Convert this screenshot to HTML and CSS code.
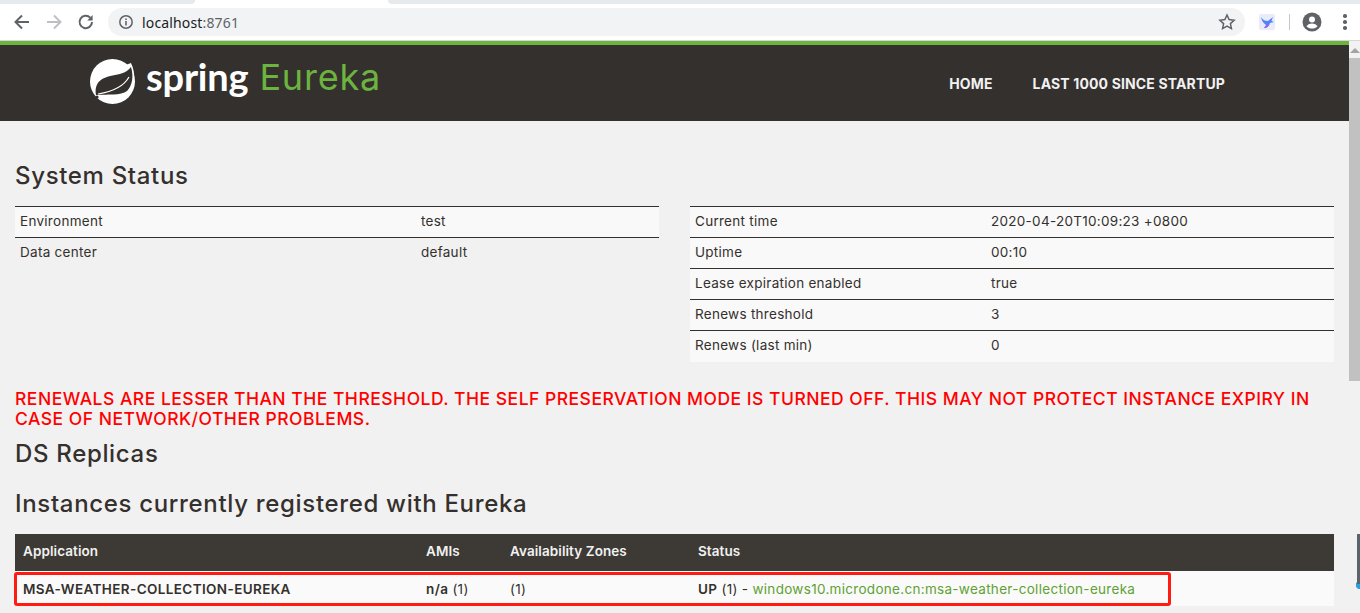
FILE: index.html
```html
<!DOCTYPE html>
<html lang="en">
<head>
<meta charset="utf-8">
<title>Eureka</title>
<link rel="stylesheet" href="styles.css">
</head>
<body>
<div class="tabstrip"><div class="tab-left"></div><div class="tab-gap"></div><div class="tab-right"></div></div>
<div class="toolbar">
  <svg class="tb-icon" width="20" height="20" viewBox="0 0 20 20"><path d="M17 10H4M10 3.5L3.5 10l6.5 6.5" fill="none" stroke="#5f6368" stroke-width="2"/></svg>
  <svg class="tb-icon" width="20" height="20" viewBox="0 0 20 20"><path d="M3 10h13M10 3.5l6.5 6.5-6.500 6.500" fill="none" stroke="#bdbfc2" stroke-width="2"/></svg>
  <svg class="tb-icon" width="20" height="20" viewBox="0 0 20 20"><path d="M16 10a6.2 6.2 0 1 1-1.8-4.4" fill="none" stroke="#5f6368" stroke-width="2"/><path d="M16.6 3v5.4h-5.4z" fill="#5f6368"/></svg>
  <div class="omnibox">
    <svg width="16" height="16" viewBox="0 0 16 16"><circle cx="8" cy="8" r="6.2" fill="none" stroke="#5f6368" stroke-width="1.5"/><path d="M8 7v4.4M8 4.4v1.5" stroke="#5f6368" stroke-width="1.6"/></svg>
    <span class="url">localhost<span class="port">:8761</span></span>
    <svg class="star" width="18" height="18" viewBox="0 0 18 18"><path d="M9 2l2.1 4.6 5 .6-3.700 3.400 1 5L9 13.100l-4.400 2.500 1-5L1.900 7.200l5-.6z" fill="none" stroke="#5f6368" stroke-width="1.500"/></svg>
  </div>
  <div class="ext"><svg width="16" height="16" viewBox="0 0 16 16"><rect width="16" height="16" rx="2" fill="#e9ebfa"/><path d="M2 3C4 6 6 7 9 7L14 3L12.500 7L15 8L11 9C10 12 8 14 5 14L7 11C4 9 2.500 6 2 3z" fill="#4f86f7"/><path d="M5 14C8 14 10 12 11 9L8 11z" fill="#a05cf0"/></svg></div>
  <div class="tb-sep"></div>
  <svg class="avatar" width="20" height="20" viewBox="0 0 20 20"><circle cx="10" cy="10" r="9.500" fill="#5f6368"/><circle cx="10" cy="7.500" r="3" fill="#fff"/><path d="M4.500 14.300c1.500-2 3.500-2.700 5.500-2.700s4 .7 5.500 2.700c-1.300 1.500-3.300 2.300-5.500 2.300s-4.200-.8-5.500-2.300z" fill="#fff"/></svg>
  <div class="menu"><i></i><i></i><i></i></div>
</div>
<div class="viewport">
  <main class="page">
    <nav class="navbar">
      <div class="brand">
        <svg class="leaf" width="50" height="50" viewBox="0 0 50 50"><circle cx="22.500" cy="24.500" r="22.500" fill="#fff"/><path d="M33 9L41 6C46 17 45 27 40 36z" fill="#fff"/><path d="M6 38C4 25 12 20 25 18C32 17 37 15 41 10C44 20 42 29 37 34C31 39 17 37 6 38z" fill="#34302d"/><path d="M8 37C20 35 33 31 39 20" fill="none" stroke="#fff" stroke-width="1.200"/><circle cx="7" cy="40" r="1.600" fill="#34302d"/></svg>
        <span class="brand-spring">spring</span>
        <span class="brand-eureka">Eureka</span>
      </div>
      <div class="nav-links"><a>HOME</a><a>LAST 1000 SINCE STARTUP</a></div>
    </nav>
    <div class="content">
      <h1 class="title-status">System Status</h1>
      <div class="columns">
        <table class="info">
          <tr class="odd"><td class="k">Environment</td><td>test</td></tr>
          <tr><td class="k">Data center</td><td>default</td></tr>
        </table>
        <table class="info">
          <tr class="odd"><td class="k2">Current time</td><td>2020-04-20T10:09:23 +0800</td></tr>
          <tr class="odd"><td class="k2">Uptime</td><td>00:10</td></tr>
          <tr class="odd"><td class="k2">Lease expiration enabled</td><td>true</td></tr>
          <tr class="odd"><td class="k2">Renews threshold</td><td>3</td></tr>
          <tr class="odd"><td class="k2">Renews (last min)</td><td>0</td></tr>
        </table>
      </div>
      <h4 class="warning">RENEWALS ARE LESSER THAN THE THRESHOLD. THE SELF PRESERVATION MODE IS TURNED OFF. THIS MAY NOT PROTECT INSTANCE EXPIRY IN CASE OF NETWORK/OTHER PROBLEMS.</h4>
      <h1 class="title-ds">DS Replicas</h1>
      <h1 class="title-inst">Instances currently registered with Eureka</h1>
      <table class="instances">
        <tr class="head"><th class="c1">Application</th><th class="c2">AMIs</th><th class="c3">Availability Zones</th><th>Status</th></tr>
        <tr class="row"><td><b>MSA-WEATHER-COLLECTION-EUREKA</b></td><td><b>n/a</b> (1)</td><td>(1)</td><td><b>UP</b> (1) - <a class="link">windows10.microdone.cn:msa-weather-collection-eureka</a></td></tr>
      </table>
    </div>
    <div class="callout"></div>
  </main>
  <aside class="scrollbar"><div class="arrow"></div><div class="thumb"></div></aside>
  <div class="thermo"></div>
</div>
</body>
</html>
```
FILE: styles.css
```css
* { box-sizing: border-box; }
html, body { margin: 0; height: 613px; overflow: hidden; background: #fff; }
body { font-family: "Inter", "Noto Sans", sans-serif; color: #34302d; }

.tabstrip { height: 4px; display: flex; background: #fff; }
.tab-left { width: 195px; background: #e7eaed; border-radius: 0 0 6px 0; }
.tab-gap { flex: 0 0 193px; }
.tab-right { flex: 1; background: #e7eaed; border-radius: 0 0 0 6px; }

.toolbar { height: 36px; display: flex; align-items: center; background: #fff; padding-left: 12px; }
.tb-icon { margin-right: 12px; flex: none; }
.omnibox { width: 1137px; height: 28px; border-radius: 14px; background: #f1f3f4; display: flex; align-items: center; padding-left: 10px; flex: none; }
.url { margin-left: 8px; font: 14px "Noto Sans", "Open Sans", sans-serif; color: #202124; letter-spacing: 0.15px; }
.port { color: #5f6368; }
.star { margin-left: auto; margin-right: 9px; }
.ext { margin-left: 14px; width: 16px; height: 16px; flex: none; display: flex; }
.tb-sep { width: 1px; height: 16px; background: #c4c6c8; margin-left: 14px; }
.avatar { margin-left: 12px; flex: none; }
.menu { margin-left: 21px; display: flex; flex-direction: column; gap: 2.500px; }
.menu i { width: 3.500px; height: 3.500px; border-radius: 50%; background: #5f6368; display: block; }

.viewport { position: relative; display: flex; height: 573px; border-top: 1px solid #d5d7d9; overflow: hidden; background: #f1f1f1; }
.page { position: relative; flex: 1; min-width: 0; overflow: hidden; }
.navbar { height: 80px; border-top: 4px solid #6db33f; background: #34302d; display: flex; justify-content: space-between; padding: 0 124px 0 90px; }
.brand { display: flex; align-items: flex-start; padding-top: 12px; color: #fff; }
.leaf { flex: none; margin-right: -4px; }
.brand-spring { font: 700 38px/44px "Lato", sans-serif; margin-left: 10px; letter-spacing: -0.2px; margin-top: -3px; }
.brand-eureka { font: 400 36px/44px "Inter", sans-serif; color: #6db33f; margin-left: 11px; letter-spacing: 0.8px; margin-top: -2px; }
.nav-links { display: flex; gap: 40px; padding-top: 30px; }
.nav-links a { font: 700 14px/17px "Inter", sans-serif; color: #f1f1f1; letter-spacing: 0.14px; }

.content { padding: 0 15px; }
h1 { margin: 0; font-weight: 500; font-size: 24px; line-height: 30px; color: #34302d; letter-spacing: 0.67px; }
.title-status { margin-top: 40px; }
.columns { display: grid; grid-template-columns: 644px 644px; column-gap: 31px; margin-top: 15px; height: 155px; align-items: start; }
table { border-collapse: collapse; border-spacing: 0; }
.info { width: 644px; table-layout: fixed; font-size: 13.500px; color: #34302d; letter-spacing: 0.28px; }
.info td { height: 31px; padding: 0 5px 2px; border-top: 1px solid #34302d; vertical-align: middle; }
.info .odd td { background: #f9f9f9; }
.info td.k { width: 401px; }
.info td.k2 { width: 296px; }
.warning { margin: 28px 0 0; font-weight: 500; font-size: 17.500px; line-height: 20px; color: #f00; letter-spacing: 0.5px; }
.title-ds { margin-top: 10px; }
.title-inst { margin-top: 20px; }
.instances { width: 1319px; margin-top: 15px; table-layout: fixed; font-size: 13.500px; letter-spacing: 0.3px; }
.instances th { background: #3d3a35; color: #f1f1f1; font-weight: 600; text-align: left; height: 37px; padding: 0 8px 3px; font-size: 13.500px; letter-spacing: 0.08px; }
.instances .c1 { width: 403px; }
.instances .c2 { width: 84px; }
.instances .c3 { width: 188px; }
.instances td { background: #fafafa; height: 35px; padding: 0 8px; }
.instances b { font-weight: 600; letter-spacing: 0.38px; }
.link { color: #5fa134; }
.callout { position: absolute; left: 14px; top: 531px; width: 1157px; height: 34px; border: 3px solid #ff1a12; border-radius: 3px; }

.scrollbar { width: 11px; flex: none; background: #f1f1f1; padding-top: 7px; }
.arrow { width: 0; height: 0; margin: 0 auto; border-left: 5px solid transparent; border-right: 5px solid transparent; border-bottom: 5px solid #a3a3a3; }
.thumb { width: 11px; height: 323px; margin-top: 5px; background: #c1c1c1; }
.thermo { position: absolute; left: 1355px; top: 493px; width: 10px; height: 56px; background: linear-gradient(#5a646c, #5a646c) 2px 0 / 3px 50px no-repeat, radial-gradient(circle at 5px 51px, #2ba0dc 4px, transparent 4.500px); }
```
